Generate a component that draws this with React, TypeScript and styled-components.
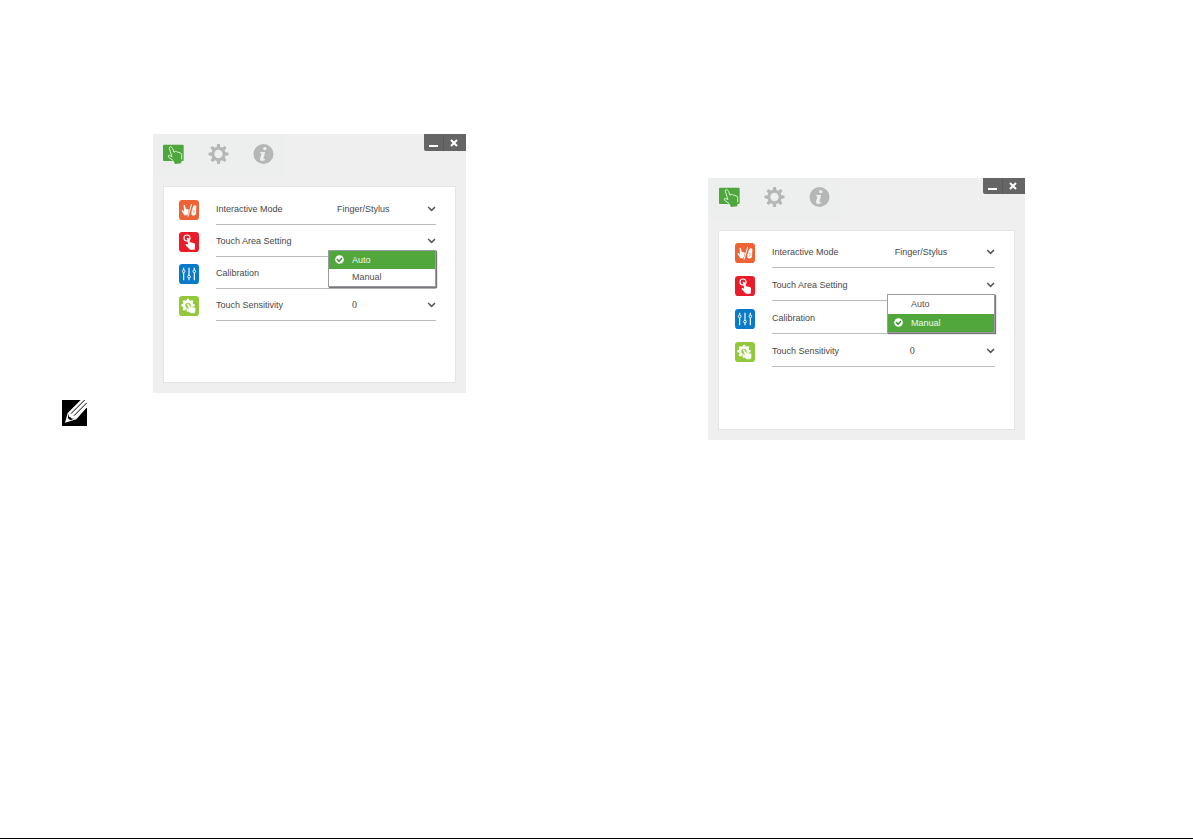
import React from "react";
import styled, { createGlobalStyle } from "styled-components";

const GlobalStyle = createGlobalStyle`
  *, *::before, *::after { box-sizing: border-box; }
  body {
    margin: 0;
    background: #fff;
    color: #484848;
    font: 9px/12px "Liberation Sans", Arial, sans-serif;
  }
`;

const Page = styled.main`
  display: grid;
  grid-template-columns: minmax(0, 404fr) minmax(0, 317fr);
  align-items: start;
  column-gap: 242px;
  min-height: 100vh;
  padding: 134px 168px 0 62px;
  border-bottom: 1px solid #000;
`;

const LeftColumn = styled.section`
  display: flex;
  flex-direction: column;
  gap: 7px;
`;

const Indented = styled.div`
  padding-left: 91px;
`;

const RightColumn = styled.section`
  padding-top: 44px;
`;

const WindowFrame = styled.div`
  padding-bottom: 10px;
  background: #efefef;
`;

const TitleBar = styled.header`
  display: flex;
  justify-content: space-between;
  align-items: flex-start;
  height: 52px;
`;

const Tabs = styled.nav<{ $top: number; $left: number }>`
  display: flex;
  gap: 24px;
  height: 42px;
  padding: ${(p) => p.$top}px 11px 0 ${(p) => p.$left}px;
  background: #edefee;
`;

const PlainButton = styled.button`
  display: block;
  margin: 0;
  padding: 0;
  border: 0;
  background: none;
  color: inherit;
  font: inherit;
  text-align: left;
`;

const Tab = styled(PlainButton)`
  width: 21px;
  height: 20px;
  color: #b5b7b6;

  svg { display: block; }
`;

const WindowControls = styled.div<{ $height: number }>`
  display: flex;
  height: ${(p) => p.$height}px;
  border-bottom-left-radius: 2px;
  background: #656565;
  overflow: hidden;
`;

const WindowControl = styled(PlainButton)<{ $wide?: boolean }>`
  display: flex;
  align-items: center;
  justify-content: center;
  width: ${(p) => (p.$wide ? 23 : 19)}px;
  padding-right: ${(p) => (p.$wide ? 2 : 0)}px;
  border-left: ${(p) => (p.$wide ? "1px solid #5a5a5a" : "0")};
`;

const Panel = styled.div<{ $height: number; $top: number; $left: number }>`
  min-height: ${(p) => p.$height}px;
  margin: 0 10px;
  padding: ${(p) => p.$top}px 19px 0 ${(p) => p.$left}px;
  border: 1px solid #e4e4e4;
  background: #fff;
`;

const Row = styled.div<{ $height: number }>`
  display: flex;
  align-items: flex-end;
  gap: 17px;
  height: ${(p) => p.$height}px;
`;

const Tile = styled.svg`
  flex: none;
  width: 20px;
  height: 20px;
  margin-bottom: 5px;
`;

const RowBody = styled.div<{ $top: number }>`
  position: relative;
  display: grid;
  grid-template-columns: minmax(0, 11fr) minmax(0, 9fr);
  align-items: center;
  flex: 1;
  height: 100%;
  padding-top: ${(p) => p.$top}px;
  border-bottom: 1px solid #bcbcbc;
`;

const Name = styled.label`
  white-space: nowrap;
`;

const Field = styled.div`
  display: flex;
  align-items: center;
  justify-content: flex-end;
`;

const Select = styled.select<{ $numeric?: boolean }>`
  appearance: none;
  flex: 1;
  min-width: 0;
  height: 14px;
  margin: 0;
  padding: 0 0 0 ${(p) => (p.$numeric ? 15 : 0)}px;
  border: 0;
  background: none;
  color: inherit;
  font: ${(p) =>
    p.$numeric
      ? '10px/14px "Liberation Serif", "Times New Roman", serif'
      : '9px/14px "Liberation Sans", Arial, sans-serif'};
`;

const Menu = styled.ul<{ $height: number }>`
  position: absolute;
  z-index: 1;
  top: calc(100% - 6px);
  right: 0;
  display: grid;
  grid-template-rows: 1fr 1fr;
  width: 108px;
  height: ${(p) => p.$height}px;
  margin: 0;
  padding: 0;
  border: 1px solid #9a9aa0;
  background: #fff;
  box-shadow: 1px 1px 1px #77777c;
  list-style: none;
`;

const Option = styled(PlainButton)<{ $selected: boolean }>`
  display: flex;
  align-items: center;
  width: 100%;
  height: 100%;
  padding-left: 6px;
  background: ${(p) => (p.$selected ? "#51a63c" : "#fff")};
  color: ${(p) => (p.$selected ? "#f0f8ed" : "#505050")};
`;

const Mark = styled.span`
  display: flex;
  width: 17px;
`;

const NoteIcon = styled.svg`
  display: block;
  width: 25px;
  height: 26px;
`;

const TouchIcon = () => (
  <svg width="21" height="20" viewBox="0 0 63 60" aria-hidden="true">
    <path d="M0 5q0-3 3-3h56q3 0 3 3v43q0 3-3 3H3q-3 0-3-3z" fill="#4ea73d" />
    <path d="M30 48l24-22 6 6v16l-5 4v6l-19 2z" fill="#4ea73d" />
    <path
      d="M31 50L17 40q-4-5 2-6l8 4-8-24q-1-6 4-6 4 1 6 6l4 11q3-5 8-2l3 2q4-2 7 2 5 0 5 5v14"
      fill="none"
      stroke="#e6f4e2"
      strokeWidth="2.8"
      strokeLinejoin="round"
    />
  </svg>
);

const GearIcon = () => (
  <svg width="21" height="20" viewBox="-31 -30 62 60" aria-hidden="true">
    <circle r="17" fill="none" stroke="currentColor" strokeWidth="9" />
    {[0, 45, 90, 135, 180, 225, 270, 315].map((angle) => (
      <path key={angle} d="M-6-19l2-11H4l2 11z" fill="currentColor" transform={`rotate(${angle})`} />
    ))}
  </svg>
);

const InfoIcon = () => (
  <svg width="21" height="20" viewBox="-31 -30 62 60" aria-hidden="true">
    <circle r="30" fill="currentColor" />
    <circle cx="4" cy="-16" r="5" fill="#edefee" />
    <path d="M-9-6H5L0 13q-1 4 5 1l-1 4Q-3 23-8 20q-4-2-2-8l4-14h-4z" fill="#edefee" />
  </svg>
);

const Chevron = () => (
  <svg width="9" height="6" viewBox="0 0 9 6" aria-hidden="true">
    <path d="M1.2 1L4.6 4.4 8 1" fill="none" stroke="#555" strokeWidth="1.5" />
  </svg>
);

const CheckMark = () => (
  <svg width="9" height="9" viewBox="0 0 27 27" aria-hidden="true">
    <circle cx="13.5" cy="13.5" r="13" fill="#fff" />
    <path d="M6 12l6 7 9-10" fill="none" stroke="#43933a" strokeWidth="4.5" />
  </svg>
);

const ModeTile = () => (
  <Tile viewBox="0 0 60 60" aria-hidden="true">
    <rect width="60" height="60" rx="10" fill="#ee6336" />
    <path
      d="M14 16q2-4 4 0l2 10 3 1 4 1q3 1 2 6l-4 12H16L8 33q0-4 3-2l4 4z"
      fill="#fff"
    />
    <path d="M38 12L27 50" stroke="#fff" strokeWidth="3" />
    <path d="M43 17q8-4 9 2l-1 22q-4 8-12 5-4-4-1-13z" fill="#fff" />
    <path d="M42 28l4 6-3 6" fill="none" stroke="#ee6336" strokeWidth="2" />
  </Tile>
);

const AreaTile = () => (
  <Tile viewBox="0 0 60 60" aria-hidden="true">
    <rect width="60" height="60" rx="10" fill="#e91c29" />
    <circle cx="24" cy="18" r="9" fill="none" stroke="#fff" strokeWidth="3.5" />
    <path
      d="M23 19q3-4 6 0l4 12 12 2q4 2 3 7l-1 13H33L20 40q-2-5 4-4l4 2z"
      fill="#fff"
    />
  </Tile>
);

const CalibrationTile = () => (
  <Tile viewBox="0 0 60 60" aria-hidden="true">
    <rect width="60" height="60" rx="10" fill="#087ac8" />
    <path d="M14 11v7m0 9v22M30 11v23m0 9v6M46 11v7m0 9v22" stroke="#fff" strokeWidth="3.5" />
    <g fill="none" stroke="#fff" strokeWidth="3">
      <circle cx="14" cy="22" r="4" />
      <circle cx="30" cy="38" r="4" />
      <circle cx="46" cy="22" r="4" />
    </g>
  </Tile>
);

const SensitivityTile = () => (
  <Tile viewBox="0 0 60 60" aria-hidden="true">
    <rect width="60" height="60" rx="10" fill="#93c83d" />
    <g transform="translate(27 28)">
      <circle r="12" fill="none" stroke="#fff" strokeWidth="8" />
      {[0, 45, 90, 135, 180, 225, 270, 315].map((angle) => (
        <path key={angle} d="M-4-14l1-6h6l1 6z" fill="#fff" transform={`rotate(${angle})`} />
      ))}
    </g>
    <path
      d="M23 24q3-4 6 0l5 8 13 2q4 2 3 7l-2 11H34L22 42q-2-4 3-4l4 1z"
      fill="#fff"
      stroke="#93c83d"
      strokeWidth="1.5"
    />
  </Tile>
);

type Metrics = {
  tabTop: number;
  tabLeft: number;
  controlHeight: number;
  panelHeight: number;
  panelTop: number;
  panelLeft: number;
  rowHeight: number;
  rowTop: number;
  menuHeight: number;
};

const areaOptions = ["Auto", "Manual"];

function SettingsWindow({ id, selected, metrics }: { id: string; selected: string; metrics: Metrics }) {
  const { tabTop, tabLeft, controlHeight, panelHeight, panelTop, panelLeft, rowHeight, rowTop, menuHeight } = metrics;
  return (
    <WindowFrame>
      <TitleBar>
        <Tabs $top={tabTop} $left={tabLeft}>
          <Tab type="button" aria-label="Touch"><TouchIcon /></Tab>
          <Tab type="button" aria-label="Settings"><GearIcon /></Tab>
          <Tab type="button" aria-label="Information"><InfoIcon /></Tab>
        </Tabs>
        <WindowControls $height={controlHeight}>
          <WindowControl type="button" aria-label="Minimize">
            <svg width="9" height="10" viewBox="0 0 9 10" aria-hidden="true">
              <path d="M0 8h9" stroke="#fff" strokeWidth="2" />
            </svg>
          </WindowControl>
          <WindowControl type="button" aria-label="Close" $wide>
            <svg width="8" height="8" viewBox="0 0 8 8" aria-hidden="true">
              <path d="M1 1l6 6M7 1L1 7" stroke="#fff" strokeWidth="2" />
            </svg>
          </WindowControl>
        </WindowControls>
      </TitleBar>
      <Panel $height={panelHeight} $top={panelTop} $left={panelLeft}>
        <Row $height={rowHeight}>
          <ModeTile />
          <RowBody $top={rowTop}>
            <Name htmlFor={`${id}-mode`}>Interactive Mode</Name>
            <Field>
              <Select id={`${id}-mode`}><option>Finger/Stylus</option></Select>
              <Chevron />
            </Field>
          </RowBody>
        </Row>
        <Row $height={rowHeight}>
          <AreaTile />
          <RowBody $top={rowTop}>
            <Name htmlFor={`${id}-area`}>Touch Area Setting</Name>
            <Field>
              <PlainButton id={`${id}-area`} type="button" aria-haspopup="true" aria-expanded="true">
                <Chevron />
              </PlainButton>
            </Field>
            <Menu $height={menuHeight}>
              {areaOptions.map((option) => (
                <li key={option}>
                  <Option type="button" $selected={option === selected} aria-pressed={option === selected}>
                    <Mark>{option === selected && <CheckMark />}</Mark>
                    {option}
                  </Option>
                </li>
              ))}
            </Menu>
          </RowBody>
        </Row>
        <Row $height={rowHeight}>
          <CalibrationTile />
          <RowBody $top={rowTop}>
            <PlainButton type="button">Calibration</PlainButton>
          </RowBody>
        </Row>
        <Row $height={rowHeight}>
          <SensitivityTile />
          <RowBody $top={rowTop}>
            <Name htmlFor={`${id}-sensitivity`}>Touch Sensitivity</Name>
            <Field>
              <Select id={`${id}-sensitivity`} $numeric><option>0</option></Select>
              <Chevron />
            </Field>
          </RowBody>
        </Row>
      </Panel>
    </WindowFrame>
  );
}

const autoMetrics: Metrics = {
  tabTop: 10, tabLeft: 10, controlHeight: 17, panelHeight: 197, panelTop: 6, panelLeft: 15,
  rowHeight: 32, rowTop: 0, menuHeight: 37,
};
const manualMetrics: Metrics = {
  tabTop: 9, tabLeft: 11, controlHeight: 16, panelHeight: 200, panelTop: 4, panelLeft: 16,
  rowHeight: 33, rowTop: 2, menuHeight: 39,
};

export default function App() {
  return (
    <>
      <GlobalStyle />
      <Page>
        <LeftColumn>
          <Indented>
            <SettingsWindow id="auto" selected="Auto" metrics={autoMetrics} />
          </Indented>
          <NoteIcon viewBox="0 0 75 78" role="img" aria-label="Note">
            <rect width="75" height="78" fill="#000" />
            <path d="M9 68l8-29L56 0h19v22L43 58z" fill="#fff" />
            <path d="M27 41L68 0M36 47L75 8" fill="none" stroke="#000" strokeWidth="3" />
            <path d="M22 40q-5 13 4 12 1 6 12 3l-10 5q-12-1-10-13z" fill="#000" />
          </NoteIcon>
        </LeftColumn>
        <RightColumn>
          <SettingsWindow id="manual" selected="Manual" metrics={manualMetrics} />
        </RightColumn>
      </Page>
    </>
  );
}
